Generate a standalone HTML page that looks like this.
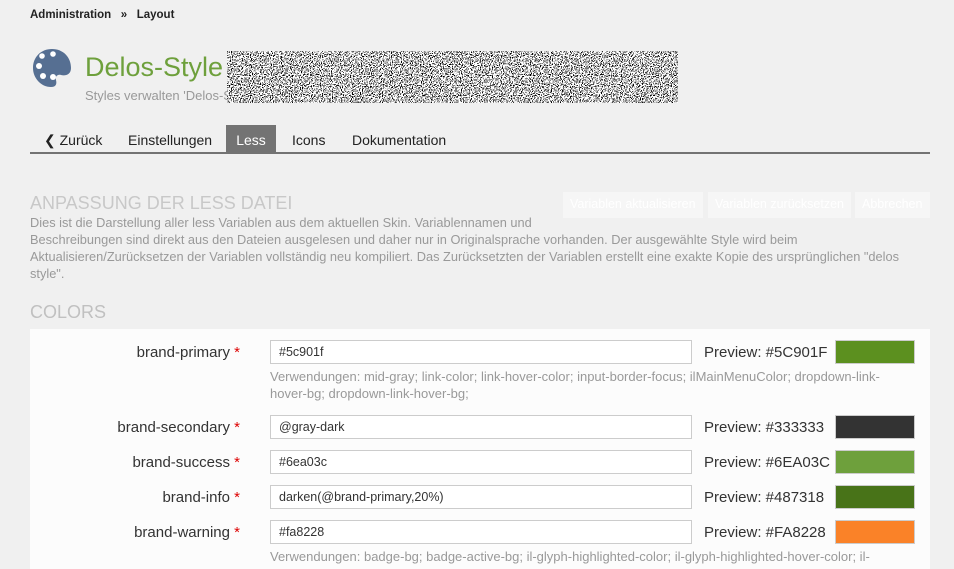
<!DOCTYPE html>
<html><head><meta charset="utf-8"><style>
*{box-sizing:border-box;margin:0;padding:0}
body{width:954px;height:565px;overflow:hidden;background:#f0f0f0;font-family:"Liberation Sans",sans-serif;color:#161616;position:relative}
.a{position:absolute;white-space:nowrap}
.lbl{position:absolute;right:714px;font-size:15px;color:#333}
.lbl b{color:#d00;font-weight:normal}
.inp{position:absolute;left:270px;width:422px;height:24px;border:1px solid #ccc;background:#fff;font-size:12.5px;padding:4px 8px;color:#333}
.pv{position:absolute;left:704px;font-size:15px;color:#333}
.sw{position:absolute;left:835px;width:80px;height:24px;border:1px solid #ccc}
.use{position:absolute;left:270px;width:630px;white-space:normal;font-size:13px;color:#999;line-height:17px}
.btn{position:absolute;top:192px;height:26px;background:#f6f6f6;color:#fff;font-size:12.5px;padding:5px 7px}
</style></head><body>
<div class="a" style="left:30px;top:9px;font-size:11.5px;font-weight:bold;color:#222">Administration &nbsp; » &nbsp; Layout</div>
<svg class="a" style="left:32px;top:48px" width="42" height="40" viewBox="0 0 42 40"><path d="M20 1C9 1 1 9 1 20c0 10 8 19 18 19 5 0 6-3 5-7-1-3 1-6 5-5 4 1 10 0 10-7C39 9 31 1 20 1z" fill="#566f92"/><circle cx="10" cy="8" r="2.8" fill="#fff"/><circle cx="21" cy="6" r="2.8" fill="#fff"/><circle cx="7" cy="18" r="3" fill="#fff"/><circle cx="11" cy="28" r="3" fill="#fff"/><circle cx="21" cy="29" r="3" fill="#fff"/></svg>
<div class="a" style="left:85px;top:52px;font-size:27px;color:#6ea03c">Delos-Style</div>
<div class="a" style="left:85px;top:88px;font-size:13px;color:#999">Styles verwalten 'Delos-St</div>
<svg class="a" style="left:227px;top:51px" width="451" height="52"><filter id="n"><feTurbulence type="fractalNoise" baseFrequency="0.9" numOctaves="1"/><feColorMatrix values="0 0 0 0 0 0 0 0 0 0 0 0 0 0 0 0 0 0 -20 9.4"/></filter><rect width="451" height="52" fill="#fff"/><rect width="451" height="52" filter="url(#n)"/></svg>
<div class="a" style="left:30px;top:152px;width:900px;height:2px;background:#737373"></div>
<div class="a" style="left:44px;top:132px;font-size:14px;color:#222">❮ Zurück</div>
<div class="a" style="left:128px;top:132px;font-size:14px;color:#222">Einstellungen</div>
<div class="a" style="left:226px;top:125px;width:50px;height:27px;background:#737373;color:#fff;font-size:14px;padding-top:7px;text-align:center">Less</div>
<div class="a" style="left:292px;top:132px;font-size:14px;color:#222">Icons</div>
<div class="a" style="left:352px;top:132px;font-size:14px;color:#222">Dokumentation</div>
<div class="a" style="left:30px;top:193px;font-size:18px;color:#c8c8c8">ANPASSUNG DER LESS DATEI</div>
<div class="btn" style="left:563px">Variablen aktualisieren</div>
<div class="btn" style="left:708px">Variablen zurücksetzen</div>
<div class="btn" style="left:855px;width:75px">Abbrechen</div>
<div class="a" style="left:30px;top:214px;width:880px;white-space:normal;font-size:12.8px;color:#999;line-height:17px">Dies ist die Darstellung aller less Variablen aus dem aktuellen Skin. Variablennamen und<br>Beschreibungen sind direkt aus den Dateien ausgelesen und daher nur in Originalsprache vorhanden. Der ausgewählte Style wird beim Aktualisieren/Zurücksetzen der Variablen vollständig neu kompiliert. Das Zurücksetzten der Variablen erstellt eine exakte Kopie des ursprünglichen "delos style".</div>
<div class="a" style="left:30px;top:302px;font-size:18px;color:#c0c0c0">COLORS</div>
<div class="a" style="left:30px;top:329px;width:900px;height:240px;background:#fcfcfc"></div>

<div class="lbl" style="top:344px">brand-primary <b>*</b></div>
<div class="inp" style="top:340px">#5c901f</div>
<div class="pv" style="top:344px">Preview: #5C901F</div>
<div class="sw" style="top:340px;background:#5c901f"></div>
<div class="use" style="top:368px">Verwendungen: mid-gray; link-color; link-hover-color; input-border-focus; ilMainMenuColor; dropdown-link-hover-bg; dropdown-link-hover-bg;</div>

<div class="lbl" style="top:419px">brand-secondary <b>*</b></div>
<div class="inp" style="top:415px">@gray-dark</div>
<div class="pv" style="top:419px">Preview: #333333</div>
<div class="sw" style="top:415px;background:#333"></div>

<div class="lbl" style="top:454px">brand-success <b>*</b></div>
<div class="inp" style="top:450px">#6ea03c</div>
<div class="pv" style="top:454px">Preview: #6EA03C</div>
<div class="sw" style="top:450px;background:#6ea03c"></div>

<div class="lbl" style="top:489px">brand-info <b>*</b></div>
<div class="inp" style="top:485px">darken(@brand-primary,20%)</div>
<div class="pv" style="top:489px">Preview: #487318</div>
<div class="sw" style="top:485px;background:#487318"></div>

<div class="lbl" style="top:524px">brand-warning <b>*</b></div>
<div class="inp" style="top:520px">#fa8228</div>
<div class="pv" style="top:524px">Preview: #FA8228</div>
<div class="sw" style="top:520px;background:#fa8228"></div>
<div class="use" style="top:548px;white-space:nowrap">Verwendungen: badge-bg; badge-active-bg; il-glyph-highlighted-color; il-glyph-highlighted-hover-color; il-</div>
</body></html>
